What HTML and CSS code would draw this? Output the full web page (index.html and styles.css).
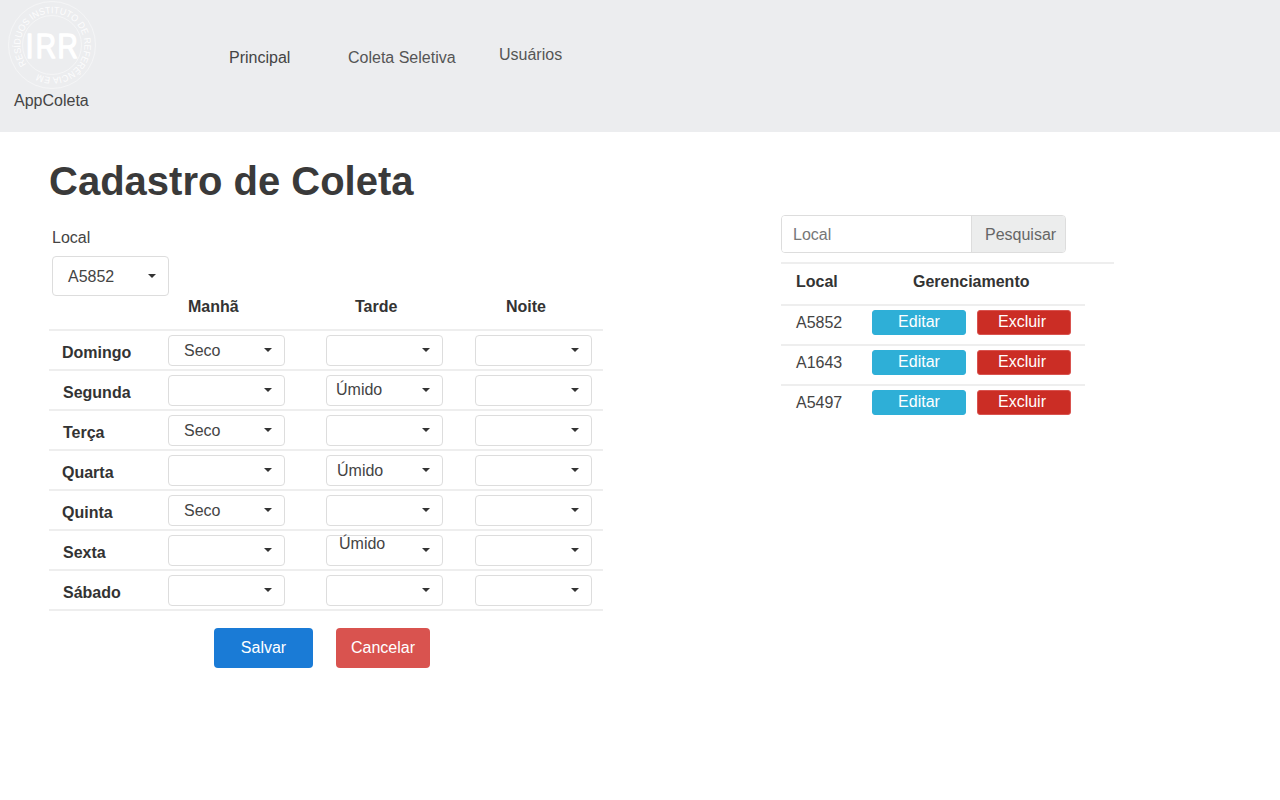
FILE: index.html
```html
<!DOCTYPE html>
<html lang="pt-BR">
<head>
<meta charset="utf-8">
<title>AppColeta</title>
<link rel="stylesheet" href="styles.css">
</head>
<body>
<header class="topbar">
  <div class="brand">
    <svg class="logo" width="90" height="90" viewBox="0 0 90 90" aria-hidden="true">
      <defs><path id="ring" d="M 19.7 64.4 A 32 32 0 1 1 24.8 69.8 A 32 32 0 0 1 19.7 64.4"/></defs>
      <circle class="logo-line" cx="45" cy="45" r="43.5"/>
      <circle class="logo-line" cx="45" cy="45" r="29.5"/>
      <text class="logo-ring"><textPath href="#ring" textLength="186" lengthAdjust="spacingAndGlyphs">RESÍDUOS INSTITUTO DE REFERÊNCIA EM</textPath></text>
      <text class="logo-mark" x="45" y="57.5" text-anchor="middle">IRR</text>
    </svg>
    <span class="brand-name">AppColeta</span>
  </div>
  <nav class="nav">
    <a class="nav-a">Principal</a>
    <a class="nav-b">Coleta Seletiva</a>
    <a class="nav-c">Usuários</a>
  </nav>
</header>
<main class="main">
  <h1 class="title">Cadastro de Coleta</h1>
  <div class="columns">
    <section class="form-col">
      <div class="local-label">Local</div>
      <div class="sel sel-local"><span class="val">A5852</span><i class="caret"></i></div>
      <div class="row head"><b class="h1">Manhã</b><b class="h2">Tarde</b><b class="h3">Noite</b></div>
      <div class="row">
        <b class="day d0">Domingo</b>
        <div class="sel"><span class="val p16">Seco</span><i class="caret"></i></div>
        <div class="sel"><span class="val"></span><i class="caret"></i></div>
        <div class="sel"><span class="val"></span><i class="caret"></i></div>
      </div>
      <div class="row">
        <b class="day">Segunda</b>
        <div class="sel"><span class="val"></span><i class="caret"></i></div>
        <div class="sel"><span class="val p10 up1">Úmido</span><i class="caret"></i></div>
        <div class="sel"><span class="val"></span><i class="caret"></i></div>
      </div>
      <div class="row">
        <b class="day">Terça</b>
        <div class="sel"><span class="val p16">Seco</span><i class="caret"></i></div>
        <div class="sel"><span class="val"></span><i class="caret"></i></div>
        <div class="sel"><span class="val"></span><i class="caret"></i></div>
      </div>
      <div class="row">
        <b class="day d0">Quarta</b>
        <div class="sel"><span class="val"></span><i class="caret"></i></div>
        <div class="sel"><span class="val p11">Úmido</span><i class="caret"></i></div>
        <div class="sel"><span class="val"></span><i class="caret"></i></div>
      </div>
      <div class="row">
        <b class="day d0">Quinta</b>
        <div class="sel"><span class="val p16">Seco</span><i class="caret"></i></div>
        <div class="sel"><span class="val"></span><i class="caret"></i></div>
        <div class="sel"><span class="val"></span><i class="caret"></i></div>
      </div>
      <div class="row">
        <b class="day">Sexta</b>
        <div class="sel"><span class="val"></span><i class="caret"></i></div>
        <div class="sel"><span class="val p13 up7">Úmido</span><i class="caret"></i></div>
        <div class="sel"><span class="val"></span><i class="caret"></i></div>
      </div>
      <div class="row">
        <b class="day">Sábado</b>
        <div class="sel"><span class="val"></span><i class="caret"></i></div>
        <div class="sel"><span class="val"></span><i class="caret"></i></div>
        <div class="sel"><span class="val"></span><i class="caret"></i></div>
      </div>
      <div class="actions">
        <button class="btn-save">Salvar</button>
        <button class="btn-cancel">Cancelar</button>
      </div>
    </section>
    <section class="list-col">
      <div class="search">
        <span class="search-input">Local</span>
        <span class="search-btn">Pesquisar</span>
      </div>
      <div class="list-head"><b class="lh-local">Local</b><b class="lh-ger">Gerenciamento</b></div>
      <div class="list-row"><span class="code">A5852</span><button class="mini edit">Editar</button><button class="mini del">Excluir</button></div>
      <div class="list-row"><span class="code">A1643</span><button class="mini edit">Editar</button><button class="mini del">Excluir</button></div>
      <div class="list-row"><span class="code">A5497</span><button class="mini edit">Editar</button><button class="mini del">Excluir</button></div>
    </section>
  </div>
</main>
</body>
</html>
```
FILE: styles.css
```css
* { box-sizing: border-box; }
html, body { margin: 0; padding: 0; }
body {
  font-family: "Liberation Sans", Arial, sans-serif;
  font-size: 16px;
  color: #444;
  background: #fff;
  height: 800px;
  overflow: hidden;
}
.topbar {
  height: 132px;
  background: #ecedef;
  display: flex;
  align-items: flex-start;
}
.brand { width: 229px; flex: none; padding: 0 0 0 7px; }
.logo { display: block; }
.logo-line { fill: none; stroke: #fff; stroke-width: 1; opacity: .45; }
.logo-ring { font-family: "Liberation Sans", Arial, sans-serif; font-size: 9.5px; fill: #fff; opacity: .9; }
.logo-mark { font-family: "Inter", sans-serif; font-size: 33px; font-weight: 300; letter-spacing: 1px; fill: #fff; stroke: #fff; stroke-width: 1.5; stroke-linejoin: round; }
.brand-name { display: block; margin: 2px 0 0 7px; line-height: 18px; color: #444; }
.nav { display: flex; align-items: flex-start; color: #555; }
.nav-a { margin-top: 49px; width: 119px; color: #444; }
.nav-b { margin-top: 49px; width: 151px; }
.nav-c { margin-top: 46px; }
.main { padding-left: 49px; }
.title {
  margin: 0;
  padding-top: 27px;
  height: 83px;
  font-size: 40px;
  line-height: 45px;
  font-weight: 700;
  color: #3a3a3a;
}
.columns { display: flex; gap: 178px; align-items: flex-start; }
.form-col { width: 554px; flex: none; }
.local-label { margin: 14px 0 0 3px; height: 27px; line-height: 18px; }
.sel {
  flex: none;
  width: 117px;
  height: 31px;
  border: 1px solid #ddd;
  border-radius: 4px;
  background: #fff;
  display: flex;
  align-items: center;
  justify-content: space-between;
  padding-right: 12px;
}
.sel-local { height: 40px; margin-left: 3px; }
.val { padding-left: 10px; margin-top: 2px; line-height: 18px; white-space: nowrap; }
.sel-local .val { padding-left: 15px; }
.p10 { padding-left: 9px; }
.p11 { padding-left: 10px; }
.p13 { padding-left: 12px; }
.p16 { padding-left: 15px; }
.up1 { margin-top: 0; }
.up7 { margin-top: -12px; }
.caret {
  width: 0;
  height: 0;
  margin-top: -1px;
  border-left: 4px solid transparent;
  border-right: 4px solid transparent;
  border-top: 4px solid #333;
}
.row {
  display: flex;
  align-items: center;
  height: 40px;
  border-bottom: 2px solid #eee;
  padding: 3px 0;
}
.row .sel + .sel { margin-left: 41px; }
.row .sel + .sel + .sel { margin-left: 32px; }
.head {
  height: 35px;
  padding: 0;
  display: block;
  position: relative;
}
.h1, .h2, .h3 { position: absolute; top: 2px; line-height: 18px; color: #333; }
.h1 { left: 139px; }
.h2 { left: 306px; }
.h3 { left: 457px; }
.day { flex: none; width: 119px; padding-left: 14px; margin-top: 5px; color: #333; white-space: nowrap; }
.d0 { padding-left: 13px; }
.actions { display: flex; padding: 17px 0 0 165px; gap: 23px; }
.actions button {
  height: 40px;
  border: 0;
  border-radius: 4px;
  color: #fff;
  font: inherit;
  padding: 0;
}
.btn-save { width: 99px; background: #1a7bd6; }
.btn-cancel { width: 94px; background: #d9534f; }
.list-col { width: 333px; flex: none; }
.search {
  display: flex;
  width: 285px;
  height: 38px;
  border: 1px solid #ddd;
  border-radius: 4px;
  overflow: hidden;
}
.search-input { width: 190px; padding: 0 11px; line-height: 38px; color: #777; background: #fff; border-right: 1px solid #ddd; }
.search-btn { flex: 1; padding-left: 13px; line-height: 38px; color: #666; background: #eceded; }
.list-head {
  margin-top: 9px;
  border-top: 2px solid #eee;
  height: 42px;
  line-height: 36px;
  display: flex;
  color: #333;
}
.lh-local { margin-left: 15px; width: 117px; }
.list-row {
  width: 304px;
  height: 40px;
  border-top: 2px solid #eee;
  display: flex;
  align-items: flex-start;
  padding-top: 3px;
}
.code { margin-left: 15px; width: 76px; line-height: 28px; }
.mini {
  width: 94px;
  height: 25px;
  margin-top: 1px;
  border-radius: 3px;
  color: #fff;
  font: inherit;
  padding: 0 0 1px;
  line-height: 18px;
  flex: none;
}
.edit { background: #2eafd7; border: 1px solid #2eafd7; }
.del { background: #cb2d25; border: 1px solid #d9534f; margin-left: 11px; padding-right: 4px; }
```
